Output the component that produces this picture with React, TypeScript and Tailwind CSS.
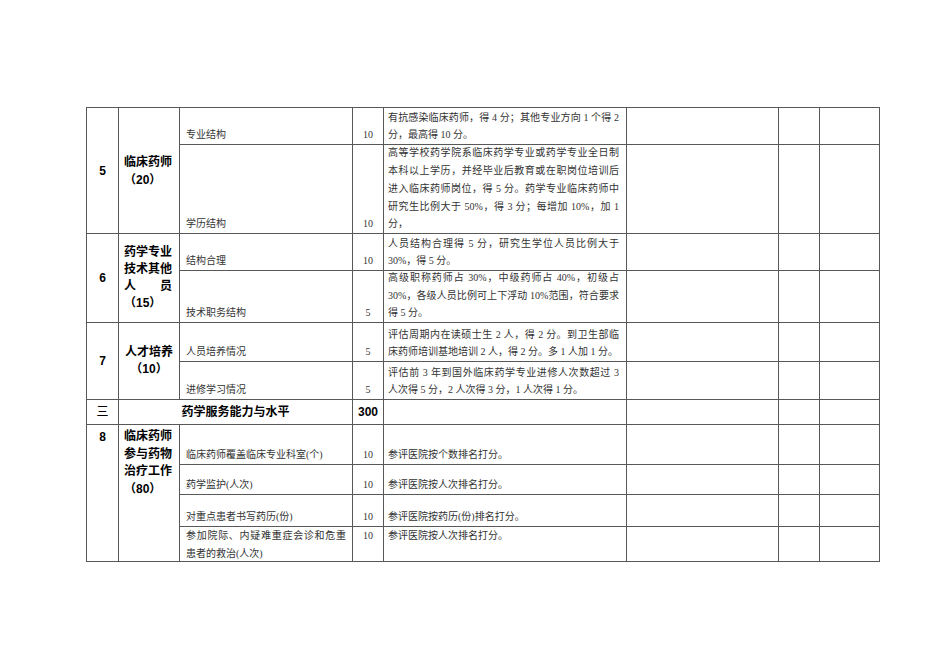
import React from "react";

const B = "border-r border-b border-[#585858]";
const BODY = "font-['Liberation_Serif','Noto_Sans_CJK_SC',serif] text-[10px] leading-[17.7px] text-[#333]";
const HEAD = "font-['Liberation_Sans','Noto_Sans_CJK_SC',sans-serif] font-bold text-[12px] text-black";

function Lines({ lines }: { lines: string[] }) {
  return (
    <div className="w-full">
      {lines.map((l, i) => (
        <div
          key={i}
          className={i < lines.length - 1 ? "whitespace-nowrap text-justify [text-align-last:justify]" : "whitespace-nowrap"}
        >
          {l}
        </div>
      ))}
    </div>
  );
}

function Empties({ row }: { row: string }) {
  return (
    <>
      <div className={`${B} col-start-6 ${row}`} />
      <div className={`${B} col-start-7 ${row}`} />
      <div className={`${B} col-start-8 ${row}`} />
    </>
  );
}

export default function App() {
  return (
    <div className="min-h-[672px] w-[950px] bg-white pl-[86px] pt-[107px]">
      <div className="grid w-fit grid-cols-[32px_61px_173px_31px_243px_152px_41px_60px] grid-rows-[37px_89px_37px_52px_39px_38px_25px_40px_30px_32px_35px] border-l border-t border-[#585858]">
        {/* Group 5 */}
        <div className={`${B} ${HEAD} col-start-1 row-start-1 row-span-2 flex items-center justify-center`}>5</div>
        <div className={`${B} ${HEAD} col-start-2 row-start-1 row-span-2 flex flex-col justify-center pl-[5px] leading-[18px]`}>
          <div>临床药师</div>
          <div>（20）</div>
        </div>
        <div className={`${B} ${BODY} col-start-3 row-start-1 flex items-end px-[6px]`}>专业结构</div>
        <div className={`${B} ${BODY} col-start-4 row-start-1 flex items-end justify-center`}>10</div>
        <div className={`${B} ${BODY} col-start-5 row-start-1 flex items-end pl-[4px] pr-[7px]`}>
          <Lines lines={["有抗感染临床药师，得 4 分；其他专业方向 1 个得 2", "分，最高得 10 分。"]} />
        </div>
        <Empties row="row-start-1" />

        <div className={`${B} ${BODY} col-start-3 row-start-2 flex items-end px-[6px]`}>学历结构</div>
        <div className={`${B} ${BODY} col-start-4 row-start-2 flex items-end justify-center`}>10</div>
        <div className={`${B} ${BODY} col-start-5 row-start-2 flex items-end pl-[4px] pr-[7px]`}>
          <Lines
            lines={[
              "高等学校药学院系临床药学专业或药学专业全日制",
              "本科以上学历，并经毕业后教育或在职岗位培训后",
              "进入临床药师岗位，得 5 分。药学专业临床药师中",
              "研究生比例大于 50%，得 3 分；每增加 10%，加 1",
              "分，",
            ]}
          />
        </div>
        <Empties row="row-start-2" />

        {/* Group 6 */}
        <div className={`${B} ${HEAD} col-start-1 row-start-3 row-span-2 flex items-center justify-center`}>6</div>
        <div className={`${B} ${HEAD} col-start-2 row-start-3 row-span-2 flex flex-col justify-center pl-[5px] leading-[17px]`}>
          <div>药学专业</div>
          <div>技术其他</div>
          <div className="flex w-[48px] justify-between">
            <span>人</span>
            <span>员</span>
          </div>
          <div>（15）</div>
        </div>
        <div className={`${B} ${BODY} col-start-3 row-start-3 flex items-end px-[6px]`}>结构合理</div>
        <div className={`${B} ${BODY} col-start-4 row-start-3 flex items-end justify-center`}>10</div>
        <div className={`${B} ${BODY} col-start-5 row-start-3 flex items-end pl-[4px] pr-[7px]`}>
          <Lines lines={["人员结构合理得 5 分，研究生学位人员比例大于", "30%，得 5 分。"]} />
        </div>
        <Empties row="row-start-3" />

        <div className={`${B} ${BODY} col-start-3 row-start-4 flex items-end px-[6px]`}>技术职务结构</div>
        <div className={`${B} ${BODY} col-start-4 row-start-4 flex items-end justify-center`}>5</div>
        <div className={`${B} ${BODY} col-start-5 row-start-4 flex items-end pl-[4px] pr-[7px]`}>
          <Lines
            lines={[
              "高级职称药师占 30%，中级药师占 40%，初级占",
              "30%，各级人员比例可上下浮动 10%范围，符合要求",
              "得 5 分。",
            ]}
          />
        </div>
        <Empties row="row-start-4" />

        {/* Group 7 */}
        <div className={`${B} ${HEAD} col-start-1 row-start-5 row-span-2 flex items-center justify-center`}>7</div>
        <div className={`${B} ${HEAD} col-start-2 row-start-5 row-span-2 flex flex-col justify-center text-center leading-[17px]`}>
          <div>人才培养</div>
          <div>（10）</div>
        </div>
        <div className={`${B} ${BODY} col-start-3 row-start-5 flex items-end px-[6px]`}>人员培养情况</div>
        <div className={`${B} ${BODY} col-start-4 row-start-5 flex items-end justify-center`}>5</div>
        <div className={`${B} ${BODY} col-start-5 row-start-5 flex items-end pl-[4px] pr-[7px]`}>
          <Lines
            lines={[
              "评估周期内在读硕士生 2 人，得 2 分。到卫生部临",
              "床药师培训基地培训 2 人，得 2 分。多 1 人加 1 分。",
            ]}
          />
        </div>
        <Empties row="row-start-5" />

        <div className={`${B} ${BODY} col-start-3 row-start-6 flex items-end px-[6px]`}>进修学习情况</div>
        <div className={`${B} ${BODY} col-start-4 row-start-6 flex items-end justify-center`}>5</div>
        <div className={`${B} ${BODY} col-start-5 row-start-6 flex items-end pl-[4px] pr-[7px]`}>
          <Lines
            lines={[
              "评估前 3 年到国外临床药学专业进修人次数超过 3",
              "人次得 5 分，2 人次得 3 分，1 人次得 1 分。",
            ]}
          />
        </div>
        <Empties row="row-start-6" />

        {/* Section 三 */}
        <div className={`${B} font-['Liberation_Sans','Noto_Sans_CJK_SC',sans-serif] text-[12px] text-black col-start-1 row-start-7 flex items-center justify-center`}>三</div>
        <div className={`${B} ${HEAD} col-start-2 col-span-2 row-start-7 flex items-center justify-center`}>药学服务能力与水平</div>
        <div className={`${B} ${HEAD} col-start-4 row-start-7 flex items-center justify-center`}>300</div>
        <div className={`${B} col-start-5 row-start-7`} />
        <Empties row="row-start-7" />

        {/* Group 8 */}
        <div className={`${B} ${HEAD} col-start-1 row-start-8 row-span-4 flex justify-center pt-[4px] leading-[17.5px]`}>8</div>
        <div className={`${B} ${HEAD} col-start-2 row-start-8 row-span-4 flex flex-col pl-[5px] pt-[3px] leading-[17.5px]`}>
          <div>临床药师</div>
          <div>参与药物</div>
          <div>治疗工作</div>
          <div>（80）</div>
        </div>

        <div className={`${B} ${BODY} col-start-3 row-start-8 flex items-end px-[6px]`}>临床药师覆盖临床专业科室(个)</div>
        <div className={`${B} ${BODY} col-start-4 row-start-8 flex items-end justify-center`}>10</div>
        <div className={`${B} ${BODY} col-start-5 row-start-8 flex items-end pl-[4px] pr-[7px]`}>参评医院按个数排名打分。</div>
        <Empties row="row-start-8" />

        <div className={`${B} ${BODY} col-start-3 row-start-9 flex items-end px-[6px]`}>药学监护(人次)</div>
        <div className={`${B} ${BODY} col-start-4 row-start-9 flex items-end justify-center`}>10</div>
        <div className={`${B} ${BODY} col-start-5 row-start-9 flex items-end pl-[4px] pr-[7px]`}>参评医院按人次排名打分。</div>
        <Empties row="row-start-9" />

        <div className={`${B} ${BODY} col-start-3 row-start-10 flex items-end px-[6px]`}>对重点患者书写药历(份)</div>
        <div className={`${B} ${BODY} col-start-4 row-start-10 flex items-end justify-center`}>10</div>
        <div className={`${B} ${BODY} col-start-5 row-start-10 flex items-end pl-[4px] pr-[7px]`}>参评医院按药历(份)排名打分。</div>
        <Empties row="row-start-10" />

        <div className={`${B} ${BODY} col-start-3 row-start-11 flex items-start px-[6px] leading-[17.5px]`}>
          <Lines lines={["参加院际、内疑难重症会诊和危重", "患者的救治(人次)"]} />
        </div>
        <div className={`${B} ${BODY} col-start-4 row-start-11 flex items-start justify-center leading-[17.5px]`}>10</div>
        <div className={`${B} ${BODY} col-start-5 row-start-11 flex items-start pl-[4px] pr-[7px] leading-[17.5px]`}>参评医院按人次排名打分。</div>
        <Empties row="row-start-11" />
      </div>
    </div>
  );
}
